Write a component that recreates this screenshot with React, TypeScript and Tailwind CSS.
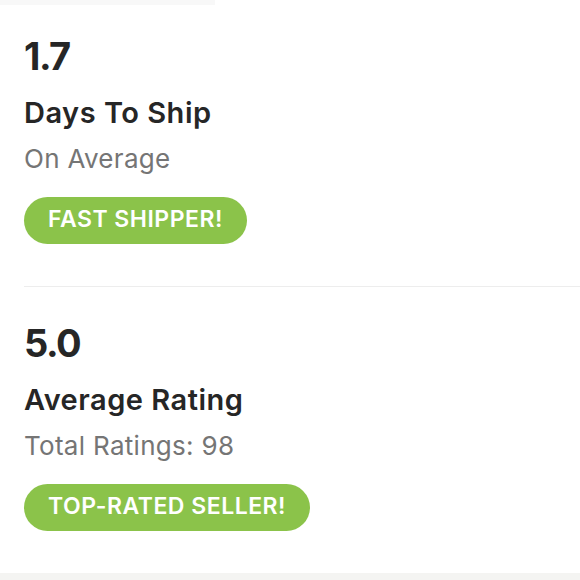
import React from 'react'

interface StatProps {
  value: string
  title: string
  subtitle: string
  badge: string
}

function StatBlock({ value, title, subtitle, badge }: StatProps) {
  return (
    <div className="pl-6 pt-[36px] pb-[42px] flex flex-col items-start">
      <div className="text-[38px] leading-[40px] font-bold text-[#262626] tracking-[-1.5px]">{value}</div>
      <div className="mt-[19px] text-[29px] leading-[36px] font-semibold text-[#262626] tracking-[0.5px]">{title}</div>
      <div className="mt-[12px] text-[26px] leading-[32px] text-[#757575] tracking-[0.3px]">{subtitle}</div>
      <div className="mt-[22px] h-[47px] px-6 pb-[3px] rounded-full bg-[#8bc34a] flex items-center">
        <span className="text-[23px] font-semibold text-white tracking-[0.5px]">{badge}</span>
      </div>
    </div>
  )
}

export default function App() {
  return (
    <div className="w-[580px] h-[580px] bg-white flex flex-col overflow-hidden" style={{ fontFamily: 'Inter, "Open Sans", sans-serif' }}>
      <div className="h-[5px] w-[215px] bg-[#f8f8f8] shrink-0" />
      <div className="-mt-[5px]">
        <StatBlock value="1.7" title="Days To Ship" subtitle="On Average" badge="FAST SHIPPER!" />
      </div>
      <div className="ml-6 h-px bg-[#ededed] shrink-0" />
      <StatBlock value="5.0" title="Average Rating" subtitle="Total Ratings: 98" badge="TOP-RATED SELLER!" />
      <div className="flex-1" />
      <div className="h-[9px] bg-[#f4f4f2] shrink-0" />
    </div>
  )
}
